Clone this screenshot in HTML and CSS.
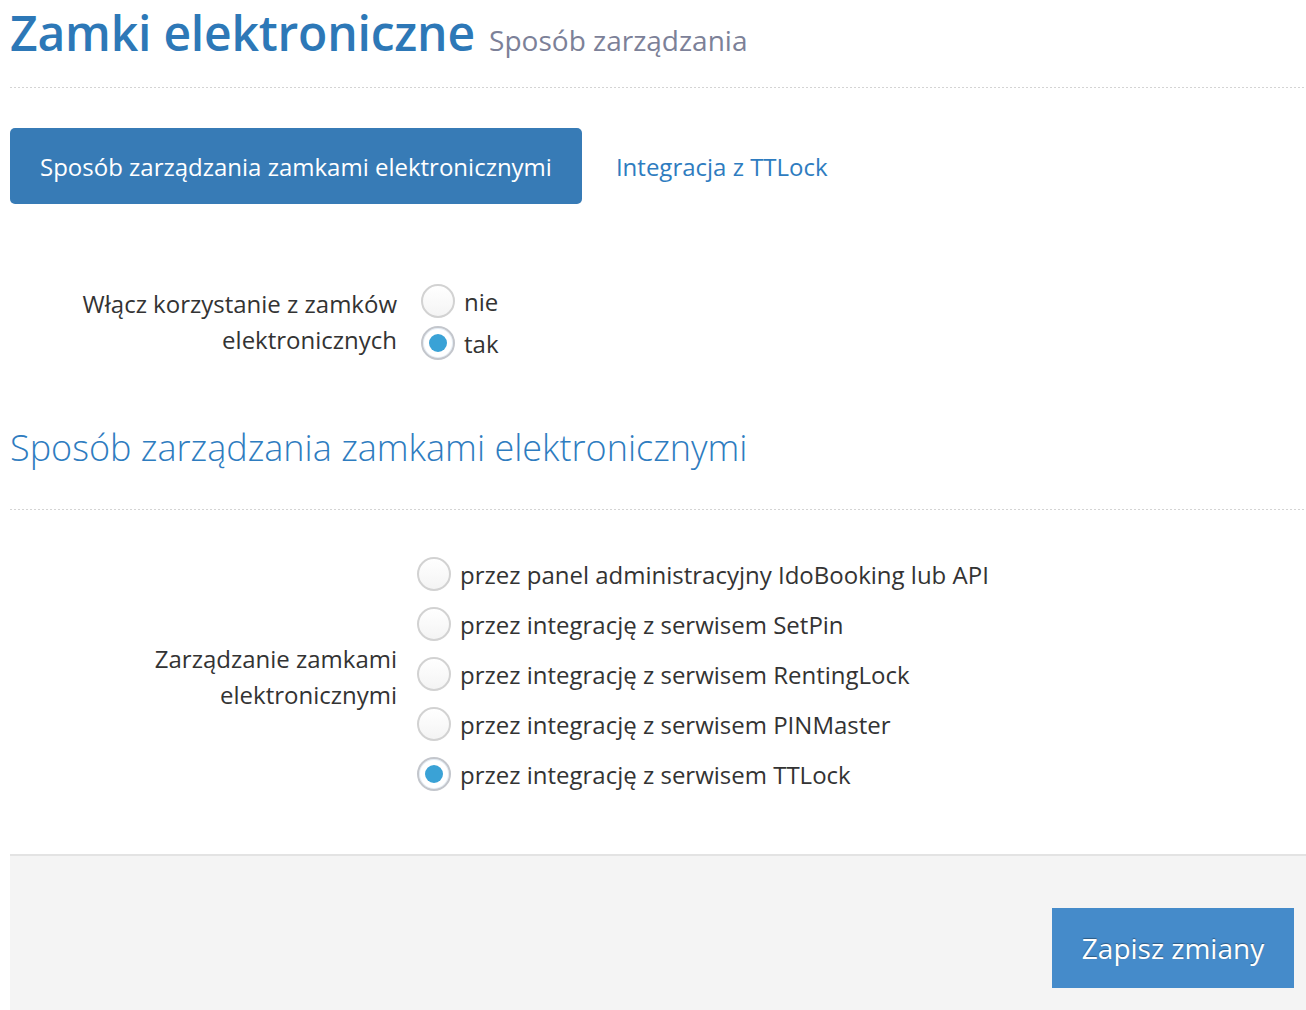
FILE: index.html
```html
<!DOCTYPE html>
<html lang="pl">
<head>
<meta charset="utf-8">
<title>Zamki elektroniczne</title>
<link rel="stylesheet" href="styles.css">
</head>
<body>
<div class="page">
  <h1 class="title">Zamki elektroniczne <small class="subtitle">Sposób zarządzania</small></h1>
  <div class="dots"></div>

  <nav class="tabs">
    <a class="tab tab-active">Sposób zarządzania zamkami elektronicznymi</a>
    <a class="tab tab-link">Integracja z TTLock</a>
  </nav>

  <div class="form-row row-enable">
    <div class="form-label">Włącz korzystanie z zamków elektronicznych</div>
    <div class="options options-tight">
      <label class="option"><span class="radio"></span><span>nie</span></label>
      <label class="option"><span class="radio checked"></span><span>tak</span></label>
    </div>
  </div>

  <h2 class="section-title">Sposób zarządzania zamkami elektronicznymi</h2>
  <div class="dots"></div>

  <div class="form-row row-manage">
    <div class="form-label label-manage">Zarządzanie zamkami elektronicznymi</div>
    <div class="options options-wide">
      <label class="option"><span class="radio"></span><span>przez panel administracyjny IdoBooking lub API</span></label>
      <label class="option"><span class="radio"></span><span>przez integrację z serwisem SetPin</span></label>
      <label class="option"><span class="radio"></span><span>przez integrację z serwisem RentingLock</span></label>
      <label class="option"><span class="radio"></span><span>przez integrację z serwisem PINMaster</span></label>
      <label class="option"><span class="radio checked"></span><span>przez integrację z serwisem TTLock</span></label>
    </div>
  </div>

  <div class="footer">
    <button class="save">Zapisz zmiany</button>
  </div>
</div>
</body>
</html>
```

FILE: styles.css
```css
* { box-sizing: border-box; }
html, body { margin: 0; padding: 0; background: #fff; }
body {
  font-family: "Open Sans", "Noto Sans", sans-serif;
  color: #333;
  overflow: hidden;
}
.page {
  padding-left: 10px;
  width: 1306px;
}
.title {
  margin: 0;
  font-size: 48px;
  font-weight: 600;
  line-height: 66px;
  color: #2d78b7;
  letter-spacing: -0.2px;
}
.subtitle {
  font-size: 28px;
  font-weight: 400;
  color: #7c8198;
  margin-left: 2px;
  letter-spacing: 0;
}
.dots {
  height: 1px;
  margin-top: 14px;
  background-image: linear-gradient(to right, #d4d4d4 50%, transparent 50%);
  background-size: 4px 1px;
  background-repeat: repeat-x;
}
.tabs {
  display: flex;
  align-items: center;
  margin-top: 40px;
  gap: 34px;
}
.tab {
  font-size: 24px;
  text-decoration: none;
}
.tab-active {
  background: #377bb6;
  color: #fff;
  border-radius: 5px;
  height: 76px;
  padding: 0 30px;
  display: flex;
  align-items: center;
}
.tab-link { color: #2e7cc0; }

.form-row {
  display: flex;
  align-items: flex-start;
}
.form-label {
  width: 387px;
  padding-left: 50px;
  text-align: right;
  font-size: 24px;
  line-height: 36px;
  color: #333;
}
.row-enable { margin-top: 80px; }
.row-enable .form-label { padding-top: 2px; }
.options-tight { padding-left: 24px; display: flex; flex-direction: column; gap: 8px; }
.options-tight .option { height: 34px; }
.option {
  display: flex;
  align-items: center;
  font-size: 24px;
  color: #333;
}
.radio {
  width: 34px;
  height: 34px;
  border-radius: 50%;
  border: 2px solid #d2d2d2;
  background: linear-gradient(#fff, #f4f4f4);
  margin-right: 9px;
  flex: none;
  position: relative;
}
.radio.checked {
  border-color: #c3c6cc;
  background: #fff;
  box-shadow: inset 0 0 0 1px #e6eef6;
}
.radio.checked::after {
  content: "";
  position: absolute;
  left: 6px;
  top: 6px;
  width: 18px;
  height: 18px;
  border-radius: 50%;
  background: #3aa2d6;
}

.section-title {
  margin: 64px 0 0;
  font-size: 36px;
  font-weight: 300;
  line-height: 48px;
  color: #2e7cbf;
}
.section-title + .dots { margin-top: 37px; }

.row-manage { margin-top: 47px; align-items: center; }
.label-manage { padding-top: 6px; }
.options-wide { padding-left: 20px; display: flex; flex-direction: column; gap: 16px; }
.options-wide .option { height: 34px; }

.footer {
  margin-top: 63px;
  background: #f4f4f4;
  border-top: 2px solid #e3e3e3;
  height: 170px;
  display: flex;
  justify-content: flex-end;
  align-items: flex-start;
  padding: 52px 12px 0 0;
}
.save {
  width: 242px;
  height: 80px;
  background: #458bca;
  border: none;
  border-radius: 0;
  color: #fff;
  font-family: "Open Sans", "Noto Sans", sans-serif;
  font-size: 28px;
  text-shadow: 0 -1px 1px rgba(0, 0, 0, 0.35);
}
```
